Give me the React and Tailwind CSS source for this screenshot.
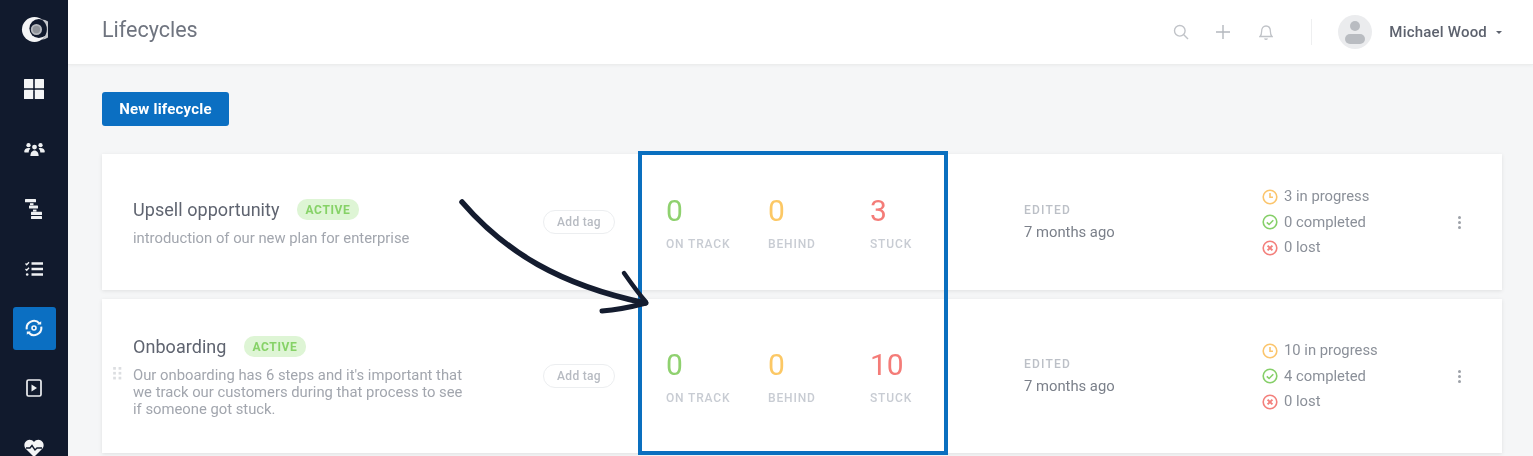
function NavItem({ active, children }) {
  return (
    <div className={`w-[43px] h-[43px] shrink-0 rounded-[3px] flex items-center justify-center ${active ? "bg-[#0b6fc2]" : ""}`}>
      {children}
    </div>
  );
}

function Sidebar() {
  return (
    <aside className="w-[68px] shrink-0 h-[456px] bg-[#111a2d] flex flex-col items-center pt-[8px] gap-[16.8px] overflow-hidden">
      <NavItem>
        <svg viewBox="0 0 28 28" className="w-[27px] h-[27px]">
          <circle cx="14" cy="14" r="13" fill="#f4f5f6" />
          <circle cx="18.500" cy="13" r="9.800" fill="#111a2d" />
          <circle cx="16" cy="14" r="4.800" fill="#8f9399" stroke="#b4b7bc" strokeWidth="2" />
          <path d="M21.500 3.500A13 13 0 0 1 21.500 24.500A10 10 0 0 0 21.500 3.500Z" fill="#c4c7cb" />
        </svg>
      </NavItem>
      <NavItem>
        <svg viewBox="0 0 20 20" className="w-[20px] h-[20px]" fill="#f4f5f6">
          <rect x="0" y="0" width="9.200" height="9.200" rx="0.500" />
          <rect x="10.800" y="0" width="9.200" height="9.200" rx="0.500" />
          <rect x="0" y="10.800" width="9.200" height="9.200" rx="0.500" />
          <rect x="10.800" y="10.800" width="9.200" height="9.200" rx="0.500" />
        </svg>
      </NavItem>
      <NavItem>
        <svg viewBox="0 0 22 16" className="w-[21px] h-[15px]" fill="#eef0f2">
          <circle cx="11" cy="5.400" r="2.600" />
          <path d="M6.600 15c0-3.600 1.800-6 4.400-6s4.400 2.400 4.400 6Z" />
          <circle cx="4.600" cy="3.400" r="2.300" />
          <path d="M0 10.600C0 7.800 1.800 6.400 4.600 6.400c.9 0 1.500.2 2 .4C5.300 8 4.800 9.400 4.800 11.200H.6Z" />
          <circle cx="17.400" cy="3.400" r="2.300" />
          <path d="M22 10.600C22 7.800 20.200 6.400 17.400 6.400c-.9 0-1.500.2-2 .4 1.300 1.200 1.800 2.600 1.800 4.400h4.200Z" />
        </svg>
      </NavItem>
      <NavItem>
        <svg viewBox="0 0 18 20" className="w-[18px] h-[20px]" fill="#eef0f2">
          <rect x="0" y="0" width="11" height="3.200" rx="0.500" />
          <rect x="5" y="4.200" width="3.500" height="2" />
          <rect x="4" y="6.400" width="9" height="3.200" rx="0.500" />
          <rect x="8" y="10.600" width="3.500" height="2" />
          <rect x="6" y="12.800" width="11" height="3.200" rx="0.500" />
          <rect x="6" y="17" width="11" height="3" rx="0.500" />
        </svg>
      </NavItem>
      <NavItem>
        <svg viewBox="0 0 18 16" className="w-[18px] h-[16px]" fill="none" stroke="#eef0f2">
          <path d="M6.500 2.500H18M6.500 8H18M6.500 13.500H18" strokeWidth="2.600" />
          <path d="M.5 2.500l1.200 1.200L4 1.200M.5 8l1.200 1.200L4 6.700" strokeWidth="1.300" />
          <circle cx="2.200" cy="13.500" r="1.300" fill="#eef0f2" stroke="none" />
        </svg>
      </NavItem>
      <NavItem active>
        <svg viewBox="0 0 20 20" className="w-[18px] h-[18px]" fill="none" stroke="#f4f7fa" strokeWidth="2.300">
          <path d="M2 11.500A8 8 0 0 1 16 5" />
          <path d="M18 8.500A8 8 0 0 1 4 15" />
          <circle cx="10" cy="10" r="2.200" strokeWidth="1.800" />
          <path d="M13.500 6.200H18V2.500z" fill="#f4f7fa" stroke="none" />
          <path d="M6.500 13.800H2v3.700z" fill="#f4f7fa" stroke="none" />
        </svg>
      </NavItem>
      <NavItem>
        <svg viewBox="0 0 16 18" className="w-[16px] h-[18px]" fill="none" stroke="#eef0f2" strokeWidth="1.700">
          <rect x="1" y="1" width="14" height="16" rx="1.500" />
          <path d="M5.500 5.500 11 9l-5.500 3.500z" fill="#eef0f2" stroke="none" />
        </svg>
      </NavItem>
      <NavItem>
        <svg viewBox="0 0 20 18" className="w-[20px] h-[18px]">
          <path d="M10 18 1.500 9.500C-.5 7 .2 3 3 1.400 5.600 0 8.300.8 10 3c1.700-2.200 4.400-3 7-1.600C19.800 3 20.500 7 18.500 9.500Z" fill="#f4f5f6" />
          <path d="M2 9h4l2-2.500L11 11l2-2h5" fill="none" stroke="#111a2d" strokeWidth="1.400" />
        </svg>
      </NavItem>
    </aside>
  );
}

function Header() {
  return (
    <header className="h-[65px] shrink-0 bg-white border-b border-[#eceded] shadow-[0_1px_3px_rgba(0,0,0,0.04)] flex items-center pl-[34px] pr-[31px]">
      <h1 className="text-[21.500px] leading-none text-[#6f747f] mb-[5px]">Lifecycles</h1>
      <div className="ml-auto flex items-center">
        <svg viewBox="0 0 16 16" className="w-[16px] h-[16px] mr-[27px]" fill="none" stroke="#c0c3c8" strokeWidth="1.400">
          <circle cx="6.800" cy="6.800" r="5.300" />
          <path d="M10.800 10.800 15 15" />
        </svg>
        <svg viewBox="0 0 14 14" className="w-[14px] h-[14px] mr-[29px]" fill="none" stroke="#b4b8be" strokeWidth="1.400">
          <path d="M7 0v14M0 7h14" />
        </svg>
        <svg viewBox="0 0 14 16" className="w-[14px] h-[16px] mr-[38px]" fill="none" stroke="#c0c3c8" strokeWidth="1.300">
          <path d="M1 12.500c1.300-1.200 1.600-2.400 1.600-5C2.600 4 4.400 2 7 2s4.400 2 4.400 5.500c0 2.600.3 3.800 1.600 5Z" />
          <path d="M5.500 14.500c.8.800 2.200.8 3 0" />
        </svg>
        <div className="w-px h-[26px] bg-[#eeeff0] mr-[26px]" />
        <div className="w-[34px] h-[34px] rounded-full bg-[#ebecee] overflow-hidden mr-[17px]">
          <div className="w-[10px] h-[10px] rounded-full bg-[#b9bcc1] mx-auto mt-[6px]" />
          <div className="w-[20px] h-[10px] rounded-full bg-[#b9bcc1] mx-auto mt-[3px]" />
        </div>
        <span className="text-[15px] font-medium text-[#5d626e] tracking-[0.2px]">Michael Wood</span>
        <span className="ml-[9px] w-0 h-0 border-x-[3px] border-x-transparent border-t-[3px] border-t-[#5d626e]" />
      </div>
    </header>
  );
}

function Clock() {
  return (
    <svg viewBox="0 0 16 16" className="w-[16px] h-[16px]" fill="none" stroke="#fbc56d" strokeWidth="1.600">
      <circle cx="8" cy="8" r="6.800" />
      <path d="M8 4v4.300h3" />
    </svg>
  );
}
function Check() {
  return (
    <svg viewBox="0 0 16 16" className="w-[16px] h-[16px]" fill="none" stroke="#86cf69" strokeWidth="1.600">
      <circle cx="8" cy="8" r="6.800" />
      <path d="m4.800 8.300 2.300 2.200 4.200-4.200" />
    </svg>
  );
}
function Lost() {
  return (
    <svg viewBox="0 0 16 16" className="w-[16px] h-[16px]" fill="none" stroke="#f3807c" strokeWidth="1.600">
      <circle cx="8" cy="8" r="6.800" />
      <path d="m5.600 5.600 4.800 4.800m0-4.800-4.800 4.800" strokeWidth="2" />
    </svg>
  );
}

function Stat({ value, label, color }) {
  return (
    <div className="w-[102px]">
      <div className={`text-[30px] leading-[32px] ${color}`}>{value}</div>
      <div className="mt-[10px] text-[12px] leading-[14px] font-medium tracking-[0.85px] text-[#c8ccd3]">{label}</div>
    </div>
  );
}

function Card({ title, desc, grip, h, stats, progress, completed, lost }) {
  return (
    <section className={`relative bg-white shadow-[0_1px_4px_rgba(0,0,0,0.09)] flex items-center pl-[31px] ${h}`}>
      {grip && (
        <svg viewBox="0 0 8 12" className="absolute left-[11px] top-[68px] w-[9px] h-[13px]" fill="#dcdee1">
          {[0, 4.500, 9].map((y) => (
            <g key={y}>
              <rect x="0" y={y} width="2.500" height="2.500" />
              <rect x="5" y={y} width="2.500" height="2.500" />
            </g>
          ))}
        </svg>
      )}
      <div className="w-[410px] shrink-0 mt-[1px]">
        <div className="flex items-center">
          <h2 className="text-[18px] leading-[22px] text-[#5f6470] tracking-[0.05px]">{title}</h2>
          <span className="ml-[17px] h-[21px] px-[9px] rounded-[10px] bg-[#def5d5] text-[#86d267] text-[12px] font-bold tracking-[0.6px] flex items-center">ACTIVE</span>
        </div>
        <p className="mt-[9px] w-[338px] text-[14.800px] leading-[17px] text-[#a2a6ae]">{desc}</p>
      </div>
      <div className="w-[72px] h-[24px] shrink-0 rounded-[12px] border border-[#eceef0] flex items-center justify-center text-[12px] font-medium text-[#b7bbc2] tracking-[0.3px]">Add tag</div>
      <div className="ml-[51px] w-[358px] shrink-0 flex pt-[1px]">{stats.map((s) => <Stat key={s.label} {...s} />)}</div>
      <div className="w-[238px] shrink-0">
        <div className="text-[12px] leading-[14px] font-medium tracking-[1.2px] text-[#bcc0c7]">EDITED</div>
        <div className="mt-[6px] text-[14.800px] leading-[18px] text-[#7b808a]">7 months ago</div>
      </div>
      <div className="w-[196px] shrink-0 flex flex-col gap-[7px] text-[14.800px] leading-[18.500px] text-[#8b9099]">
        <div className="flex items-center gap-[6px]"><Clock />{progress} in progress</div>
        <div className="flex items-center gap-[6px]"><Check />{completed} completed</div>
        <div className="flex items-center gap-[6px]"><Lost />{lost} lost</div>
      </div>
      <div className="flex flex-col gap-[2px]">
        <span className="w-[3px] h-[3px] rounded-full bg-[#9da1a8]" />
        <span className="w-[3px] h-[3px] rounded-full bg-[#9da1a8]" />
        <span className="w-[3px] h-[3px] rounded-full bg-[#9da1a8]" />
      </div>
    </section>
  );
}

const green = "text-[#8fd16f]";
const yellow = "text-[#fcc865]";
const red = "text-[#f47c78]";

export default function App() {
  return (
    <div className="relative h-[456px] w-[1533px] overflow-hidden flex bg-[#f5f6f7] blur-[0.7px] font-['Roboto',sans-serif]">
      <Sidebar />
      <div className="flex-1 flex flex-col min-w-0">
        <Header />
        <main className="pl-[34px] pr-[31px] pt-[27px]">
          <button className="w-[127px] h-[34px] rounded-[3px] bg-[#0b6fc2] text-white text-[15px] font-bold tracking-[0.2px] block">New lifecycle</button>
          <div className="mt-[28px] flex flex-col gap-[9px]">
            <Card
              title="Upsell opportunity"
              desc="introduction of our new plan for enterprise"
              h="h-[136px]"
              stats={[
                { value: 0, label: "ON TRACK", color: green },
                { value: 0, label: "BEHIND", color: yellow },
                { value: 3, label: "STUCK", color: red },
              ]}
              progress={3}
              completed={0}
              lost={0}
            />
            <Card
              grip
              title="Onboarding"
              desc="Our onboarding has 6 steps and it's important that we track our customers during that process to see if someone got stuck."
              h="h-[154px]"
              stats={[
                { value: 0, label: "ON TRACK", color: green },
                { value: 0, label: "BEHIND", color: yellow },
                { value: 10, label: "STUCK", color: red },
              ]}
              progress={10}
              completed={4}
              lost={0}
            />
          </div>
        </main>
      </div>
      <div className="absolute left-[638px] top-[151px] w-[310px] h-[304px] border-[4px] border-[#0a6fbf]" />
      <svg viewBox="0 0 1533 456" className="absolute inset-0 w-[1533px] h-[456px] pointer-events-none" fill="none" stroke="#141c2f" strokeLinecap="round" strokeLinejoin="round">
        <path d="M462 202C505 252 560 285 645 303" strokeWidth="5.500" />
        <path d="M624 273C631 283 638 293 646 302" strokeWidth="4.500" />
        <path d="M602 311C617 310 631 307 646 303" strokeWidth="5" />
      </svg>
    </div>
  );
}
